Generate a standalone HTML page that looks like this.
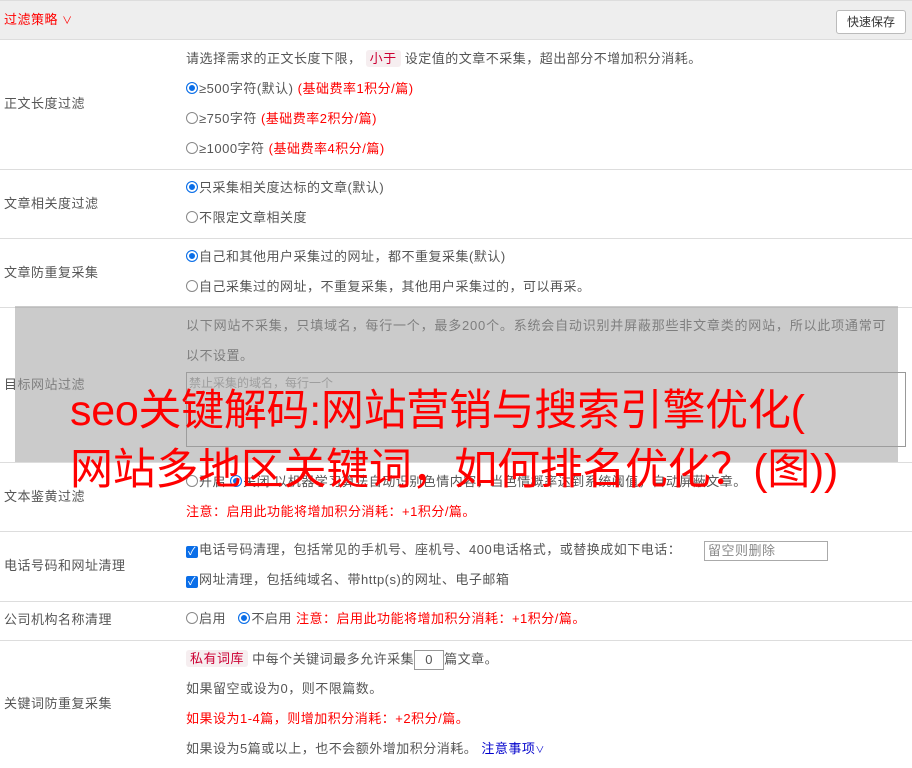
<!DOCTYPE html>
<html><head><meta charset="utf-8"><style>
*{margin:0;padding:0;box-sizing:border-box}
body{width:912px;height:768px;overflow:hidden;background:#fff;font-family:"Liberation Sans","Noto Sans CJK SC",sans-serif;font-size:13px;color:#555;position:relative}
.a{position:absolute;white-space:nowrap;line-height:18px;letter-spacing:0.5px}
.hl{position:absolute;left:0;width:912px;height:1px;background:#ddd}
.r{color:#f00}
.rad{display:inline-block;width:12px;height:12px;border:1px solid #888;border-radius:50%;vertical-align:-1px;margin-right:1px;background:#fff}
.on{border-color:#0a6ee8;box-shadow:inset 0 0 0 2px #fff;background:#0a6ee8}
.cb{display:inline-block;width:12px;height:12px;background:#0a6ee8;border-radius:2px;color:#fff;font-size:11px;line-height:12px;text-align:center;vertical-align:-1px;margin-right:1px}
.tag{background:#f6eef0;color:#c03;padding:1px 4px;border-radius:3px}
.big{position:absolute;left:70px;color:#f00;font-size:43px;line-height:58px;white-space:nowrap;letter-spacing:-0.3px}
</style></head><body>
<div style="position:absolute;left:0;top:0;width:912px;height:39px;background:#eee;border-top:1px solid #ddd"></div>
<div class="a r" style="left:4px;top:11px">过滤策略 <span style="font-size:10px">&#x2228;</span></div>
<div class="a" style="left:836px;top:10px;width:70px;height:24px;border:1px solid #bbb;border-radius:3px;background:#fff;color:#333;text-align:center;line-height:22px;font-size:12px;letter-spacing:0">快速保存</div>
<div class="hl" style="top:39px"></div>
<div class="hl" style="top:169px"></div>
<div class="hl" style="top:238px"></div>
<div class="hl" style="top:307px"></div>
<div class="hl" style="top:462px"></div>
<div class="hl" style="top:531px"></div>
<div class="hl" style="top:601px"></div>
<div class="hl" style="top:640px"></div>

<div class="a" style="left:4px;top:95px">正文长度过滤</div>
<div class="a" style="left:186px;top:50px">请选择需求的正文长度下限， <span class="tag">小于</span> 设定值的文章不采集，超出部分不增加积分消耗。</div>
<div class="a" style="left:186px;top:80px"><span class="rad on"></span>≥500字符(默认) <span class="r">(基础费率1积分/篇)</span></div>
<div class="a" style="left:186px;top:110px"><span class="rad"></span>≥750字符 <span class="r">(基础费率2积分/篇)</span></div>
<div class="a" style="left:186px;top:140px"><span class="rad"></span>≥1000字符 <span class="r">(基础费率4积分/篇)</span></div>

<div class="a" style="left:4px;top:195px">文章相关度过滤</div>
<div class="a" style="left:186px;top:179px"><span class="rad on"></span>只采集相关度达标的文章(默认)</div>
<div class="a" style="left:186px;top:209px"><span class="rad"></span>不限定文章相关度</div>

<div class="a" style="left:4px;top:264px">文章防重复采集</div>
<div class="a" style="left:186px;top:248px"><span class="rad on"></span>自己和其他用户采集过的网址，都不重复采集(默认)</div>
<div class="a" style="left:186px;top:278px"><span class="rad"></span>自己采集过的网址，不重复采集，其他用户采集过的，可以再采。</div>

<div class="a" style="left:4px;top:376px">目标网站过滤</div>
<div class="a" style="left:186px;top:317px;letter-spacing:0.8px">以下网站不采集，只填域名，每行一个，最多200个。系统会自动识别并屏蔽那些非文章类的网站，所以此项通常可</div>
<div class="a" style="left:186px;top:347px">以不设置。</div>
<div style="position:absolute;left:186px;top:372px;width:720px;height:75px;border:1px solid #999;background:#fff"></div>
<div class="a" style="left:189px;top:374px;color:#999;font-size:12px;letter-spacing:0">禁止采集的域名，每行一个</div>
<div style="position:absolute;left:15px;top:306px;width:883px;height:156px;background:rgba(160,160,160,.55)"></div>

<div class="a" style="left:4px;top:488px">文本鉴黄过滤</div>
<div class="a" style="left:186px;top:473px"><span class="rad"></span>开启 <span class="rad on"></span>关闭 以机器学习算法自动识别色情内容，当色情概率达到系统阈值，自动屏蔽文章。</div>
<div class="a r" style="left:186px;top:503px">注意：启用此功能将增加积分消耗：+1积分/篇。</div>

<div class="a" style="left:4px;top:557px">电话号码和网址清理</div>
<div class="a" style="left:186px;top:541px"><span class="cb">✓</span>电话号码清理，包括常见的手机号、座机号、400电话格式，或替换成如下电话：</div>
<div style="position:absolute;left:704px;top:541px;width:124px;height:20px;border:1px solid #aaa;background:#fff"></div>
<div class="a" style="left:708px;top:542px;color:#888">留空则删除</div>
<div class="a" style="left:186px;top:571px"><span class="cb">✓</span>网址清理，包括纯域名、带http(s)的网址、电子邮箱</div>

<div class="a" style="left:4px;top:611px">公司机构名称清理</div>
<div class="a" style="left:186px;top:610px"><span class="rad"></span>启用 &nbsp; <span class="rad on"></span>不启用 <span class="r">注意：启用此功能将增加积分消耗：+1积分/篇。</span></div>

<div class="a" style="left:4px;top:695px">关键词防重复采集</div>
<div class="a" style="left:186px;top:650px"><span class="tag">私有词库</span> 中每个关键词最多允许采集<span style="display:inline-block;width:30px;height:20px;border:1px solid #999;text-align:center;line-height:18px;vertical-align:middle">0</span>篇文章。</div>
<div class="a" style="left:186px;top:680px">如果留空或设为0，则不限篇数。</div>
<div class="a r" style="left:186px;top:710px">如果设为1-4篇，则增加积分消耗：+2积分/篇。</div>
<div class="a" style="left:186px;top:740px">如果设为5篇或以上，也不会额外增加积分消耗。 <span style="color:#00c">注意事项<span style="font-size:9px">&#x2228;</span></span></div>

<div class="big" style="top:382px">seo关键解码:网站营销与搜索引擎优化(</div>
<div class="big" style="top:441px">网站多地区关键词，如何排名优化？(图))</div>
</body></html>
